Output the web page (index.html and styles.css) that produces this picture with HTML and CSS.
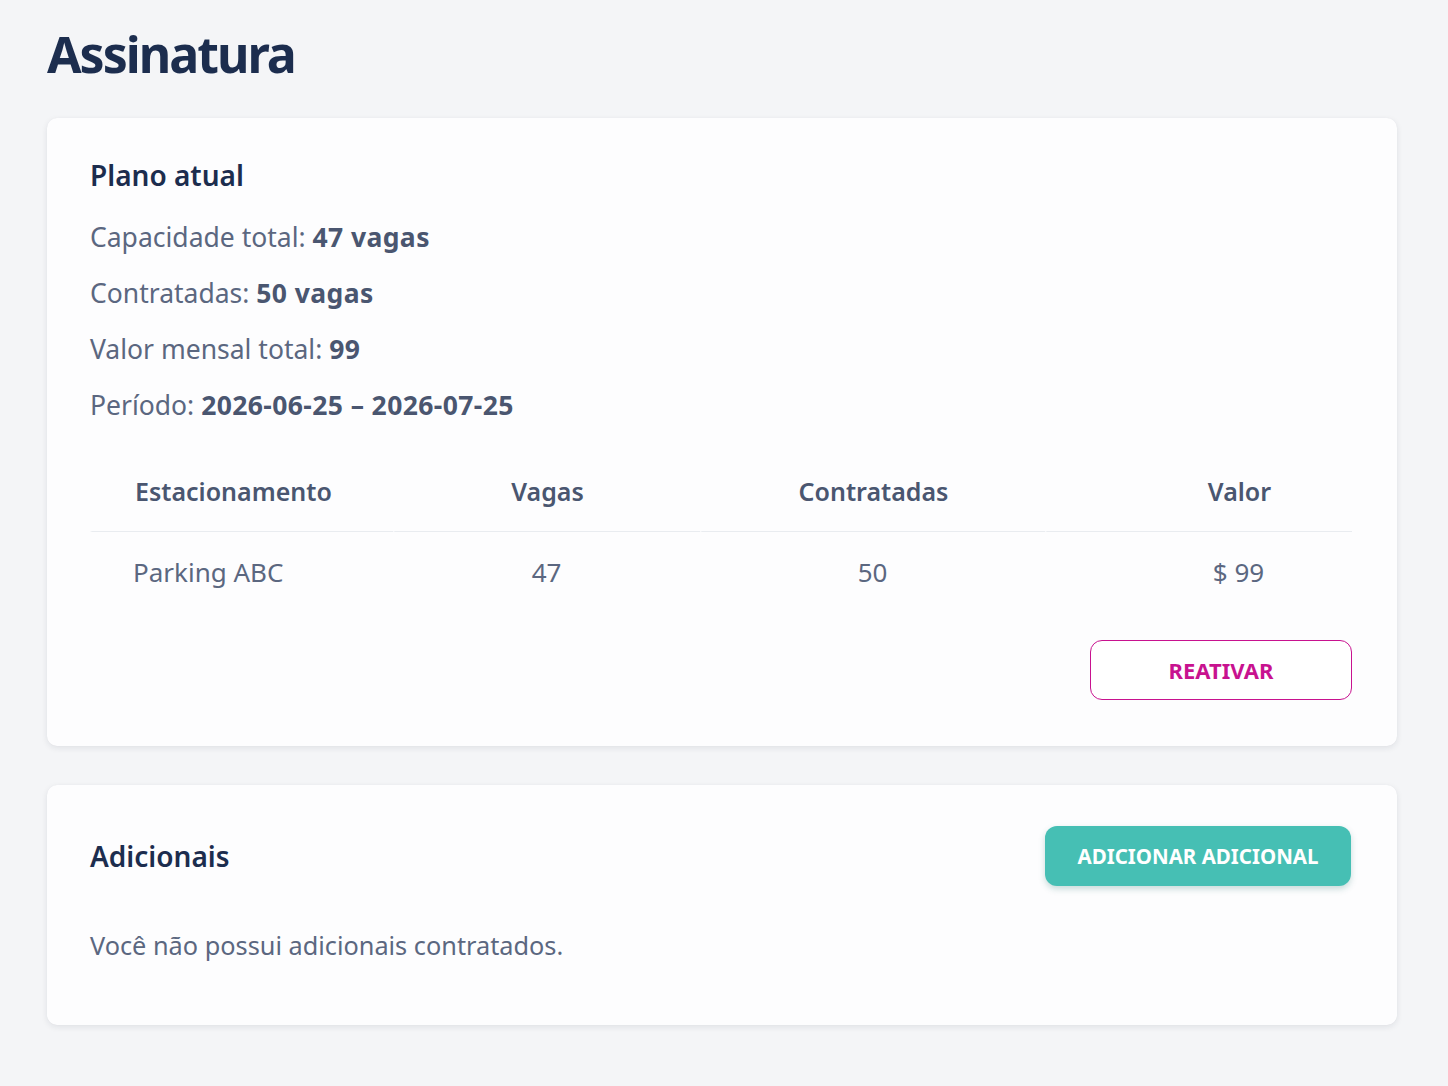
FILE: index.html
```
<!DOCTYPE html>
<html lang="pt-BR">
<head>
  <meta charset="UTF-8" />
  <meta name="viewport" content="width=device-width, initial-scale=1.0"/>
  <title>Assinatura</title>
  <link rel="stylesheet" href="styles.css">
</head>
<body>
  <div class="page">
    <h1>Assinatura</h1>

    <section class="card plan">
      <h2>Plano atual</h2>
      <p class="info">Capacidade total: <strong>47 vagas</strong></p>
      <p class="info">Contratadas: <strong>50 vagas</strong></p>
      <p class="info">Valor mensal total: <strong>99</strong></p>
      <p class="info">Período: <strong>2026-06-25 – 2026-07-25</strong></p>

      <table>
        <thead>
          <tr>
            <th class="col-name">Estacionamento</th>
            <th class="col-num">Vagas</th>
            <th class="col-num col-wide">Contratadas</th>
            <th class="col-value">Valor</th>
          </tr>
        </thead>
        <tbody>
          <tr>
            <td class="col-name">Parking ABC</td>
            <td class="col-num">47</td>
            <td class="col-num col-wide">50</td>
            <td class="col-value">$ 99</td>
          </tr>
        </tbody>
      </table>

      <div class="actions">
        <button class="btn-outline">REATIVAR</button>
      </div>
    </section>

    <section class="card extras">
      <div class="card-header">
        <h2>Adicionais</h2>
        <button class="btn-primary">ADICIONAR ADICIONAL</button>
      </div>
      <p class="empty">Você não possui adicionais contratados.</p>
    </section>
  </div>
</body>
</html>
```

FILE: styles.css
```
:root {
  --color-bg: #f4f5f7;
  --color-title: #1c2d4e;
  --color-text: #5b6780;
  --color-strong: #4a5670;
  --color-line: #e9ecf0;
  --color-magenta: #c8128f;
  --color-teal: #46bfb4;
  --font: "Noto Sans", "Open Sans", sans-serif;
}
* {
  box-sizing: border-box;
}
body {
  margin: 0;
  font-family: var(--font);
  background-color: var(--color-bg);
  color: var(--color-text);
}
.page {
  padding: 22px 51px 40px 47px;
}
h1 {
  margin: 0 0 32px;
  font-size: 50px;
  line-height: 64px;
  font-weight: 700;
  letter-spacing: -2px;
  color: var(--color-title);
}
.card {
  background: #fdfdfe;
  border-radius: 10px;
  box-shadow: 0 2px 6px rgba(20, 30, 50, 0.09), 0 0 1px rgba(20, 30, 50, 0.06);
}
.card + .card {
  margin-top: 39px;
}
h2 {
  margin: 0;
  font-size: 28px;
  line-height: 36px;
  font-weight: 600;
  color: var(--color-title);
}
.plan {
  padding: 39px 45px 46px 43px;
}
.info {
  margin: 0;
  font-size: 26.5px;
  line-height: 56px;
}
.plan h2 {
  margin-bottom: 16px;
}
.info strong {
  font-weight: 700;
  letter-spacing: 0.4px;
  color: var(--color-strong);
}
table {
  width: 100%;
  margin-top: 17px;
  border-collapse: separate;
  border-spacing: 0;
  table-layout: fixed;
  font-size: 25px;
}
th, td {
  padding: 0;
  white-space: nowrap;
}
th {
  height: 82px;
  font-weight: 600;
  color: var(--color-strong);
  border-bottom: 1px solid var(--color-line);
  border-left: 2px solid #fdfdfe;
}
td {
  height: 80px;
  font-size: 26px;
  font-weight: 400;
  color: var(--color-text);
}
.col-name {
  width: 303px;
  text-align: left;
  padding-left: 43px;
}
.col-num {
  width: 307px;
  text-align: center;
}
.col-wide {
  width: 345px;
}
.col-value {
  text-align: center;
  padding-left: 80px;
}
.actions {
  display: flex;
  justify-content: flex-end;
  margin-top: 28px;
}
button {
  font-family: var(--font);
  font-size: 22px;
  font-weight: 700;
  height: 60px;
  border-radius: 12px;
  cursor: pointer;
}
.btn-outline {
  width: 262px;
  background: #fff;
  color: var(--color-magenta);
  border: 1.5px solid var(--color-magenta);
}
.extras {
  padding: 41px 46px 60px 43px;
}
.card-header {
  display: flex;
  align-items: center;
  justify-content: space-between;
}
.btn-primary {
  width: 306px;
  font-size: 20.5px;
  background: var(--color-teal);
  color: #fff;
  border: none;
  box-shadow: 0 3px 6px rgba(40, 120, 110, 0.25);
}
.empty {
  margin: 39px 0 0;
  font-size: 25.3px;
  line-height: 40px;
}
```
